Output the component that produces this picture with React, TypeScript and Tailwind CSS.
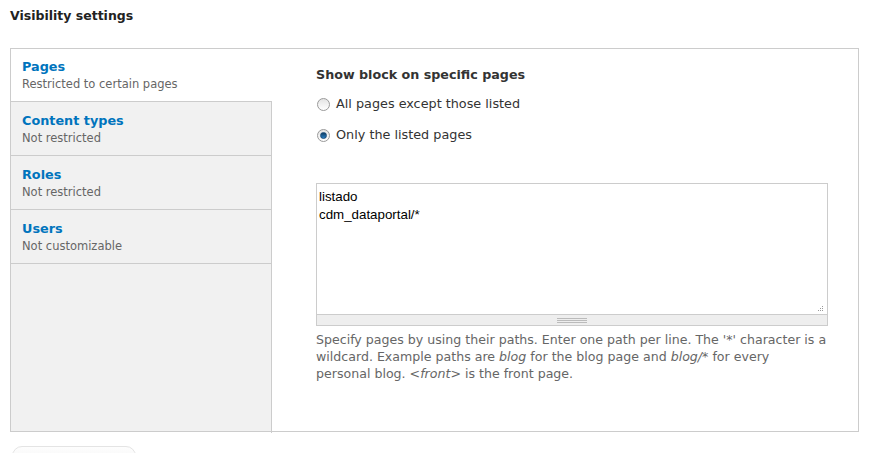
import React, { useState } from 'react';

const TABS = [
  { title: 'Pages', summary: 'Restricted to certain pages' },
  { title: 'Content types', summary: 'Not restricted' },
  { title: 'Roles', summary: 'Not restricted' },
  { title: 'Users', summary: 'Not customizable' },
];

const Radio: React.FC<{ checked: boolean; label: string; onClick: () => void }> = ({ checked, label, onClick }) => (
  <label onClick={onClick} className="flex items-center h-[20px] cursor-pointer">
    <span className="relative w-[13px] h-[13px] rounded-full border border-[#9a9a9a] bg-gradient-to-b from-[#e4e4e4] to-[#ffffff] flex items-center justify-center ml-[1px]">
      {checked && (
        <span className="w-[7px] h-[7px] rounded-full bg-gradient-to-b from-[#0f3f66] to-[#2b7fc4] border border-[#164a78]" />
      )}
    </span>
    <span className="ml-[6px] text-[12.8px] text-[#333]">{label}</span>
  </label>
);

export default function App() {
  const [active, setActive] = useState(0);
  const [mode, setMode] = useState(1);

  return (
    <div className="w-[872px] h-[453px] bg-white overflow-hidden text-[#333]" style={{ fontFamily: '"DejaVu Sans", Verdana, sans-serif' }}>
      <h2 className="pl-[10px] pt-[7px] text-[12.5px] font-bold leading-[18px] text-[#222]">Visibility settings</h2>

      <div className="ml-[10px] mt-[23px] w-[849px] h-[384px] border border-[#ccc] flex">
        <ul className="w-[261px] shrink-0 bg-[#f1f1f1]">
          {TABS.map((t, i) => (
            <li
              key={t.title}
              onClick={() => setActive(i)}
              className={`${i === 0 ? 'h-[53px] pt-[9px]' : 'h-[54px] pt-[10px]'} border-b border-[#ccc] px-[11px] cursor-pointer ${i === active ? 'bg-white border-r-0' : 'border-r border-r-[#ccc]'}`}
            >
              <div className="text-[12.8px] font-bold leading-[17px] text-[#0074bd]">{t.title}</div>
              <div className="text-[11.5px] leading-[18px] text-[#666]">{t.summary}</div>
            </li>
          ))}
          <li className="h-[169px] border-r border-[#ccc]" />
        </ul>

        <div className="flex-1 pl-[44px] pt-[17px]">
          <div className="text-[12.7px] font-bold text-[#333] leading-[18px]">Show block on specific pages</div>
          <div className="mt-[10px] flex flex-col gap-[11px]">
            <Radio checked={mode === 0} label="All pages except those listed" onClick={() => setMode(0)} />
            <Radio checked={mode === 1} label="Only the listed pages" onClick={() => setMode(1)} />
          </div>

          <div className="mt-[38px] w-[512px]">
            <div className="relative h-[131px] border border-[#ccc] border-b-0 bg-white px-[2px] pt-[4px] text-[13.33px] leading-[18px] text-black" style={{ fontFamily: '"Liberation Sans", Arial, sans-serif' }}>
              <div>listado</div>
              <div>cdm_dataportal/*</div>
              <svg className="absolute right-[3px] bottom-[2px]" width="7" height="7" viewBox="0 0 7 7">
                <rect x="5" y="1" width="1" height="1" fill="#999" />
                <rect x="3" y="3" width="1" height="1" fill="#999" />
                <rect x="5" y="3" width="1" height="1" fill="#999" />
                <rect x="1" y="5" width="1" height="1" fill="#999" />
                <rect x="3" y="5" width="1" height="1" fill="#999" />
                <rect x="5" y="5" width="1" height="1" fill="#999" />
              </svg>
            </div>
            <div className="h-[12px] border border-[#ccc] bg-[#eee] flex items-center justify-center">
              <div className="w-[30px] h-[5px] border-y border-[#bbb] flex items-center">
                <div className="w-full h-[1px] bg-[#bbb]" />
              </div>
            </div>
            <p className="mt-[5px] text-[12.6px] leading-[17px] text-[#666] whitespace-nowrap">
              Specify pages by using their paths. Enter one path per line. The '*' character is a<br />
              wildcard. Example paths are <em>blog</em> for the blog page and <em>blog/*</em> for every<br />
              personal blog. <em>&lt;front&gt;</em> is the front page.
            </p>
          </div>
        </div>
      </div>

      <div className="ml-[12px] mt-[14px] w-[124px] h-[28px] rounded-[10px] border border-[#e4e4e4] bg-gradient-to-b from-[#fdfdfd] to-[#f3f3f3]" />
    </div>
  );
}
